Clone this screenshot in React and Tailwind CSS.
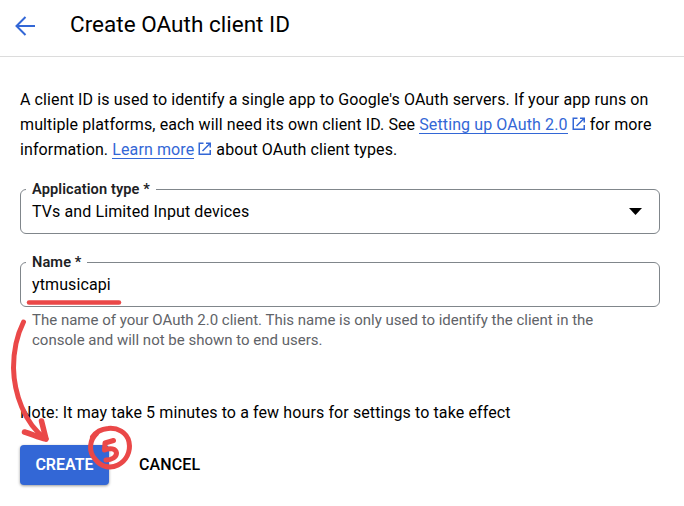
function ExternalIcon() {
  return (
    <svg className="ml-1 inline-block size-[14px] align-[-1px]" viewBox="0 0 14 14" fill="none" stroke="#3367d6" strokeWidth="1.5">
      <path d="M5.5 1.25H1.25V12.25H12.25V8" />
      <path d="M8 1.25h4.25V5.500M12 1.5L4.5 9" />
    </svg>
  );
}

function DocLink({ children }) {
  return (
    <>
      <a href="#" className="inline-block h-[22px] border-b border-[#3367d6] leading-[25px] text-[#3367d6]">{children}</a>
      <ExternalIcon />
    </>
  );
}

function Field({ label, children, className = "" }) {
  return (
    <fieldset className={"h-[54px] w-[640px] rounded-md border border-[#80868b] pl-[5px] " + className}>
      <legend className="h-[19px] px-1.5 text-[14.6px] leading-[18px] font-semibold tracking-[0.1px] text-[#202124]">{label}</legend>
      <div className="flex h-[25px] items-center justify-between pr-[17px] pl-1.5 text-base text-black">{children}</div>
    </fieldset>
  );
}

function Annotations() {
  return (
    <svg className="pointer-events-none absolute inset-0" width="684" height="506" viewBox="0 0 684 506" fill="none" stroke="#ea4848" strokeLinecap="round" strokeLinejoin="round">
      <path d="M29 302.5H119" strokeWidth="4.5" />
      <path d="M23.5 322C17 335 13.500 352 13.5 368C14 392 24 424 46 439" strokeWidth="5" />
      <path d="M24.5 432C32 434 38 437.5 46 439L41.5 421" strokeWidth="5.5" />
      <path d="M97 433C89 440 88.500 452 95 459C101 467 110 469 118 465C126 461 131 452 129 442C127 432 117 427.500 108 428.500C102 429 96 432 92.500 437" strokeWidth="5" />
      <path d="M113.5 440.500L105 443L104.500 450C110 447.500 116 448.500 116.500 453C116.500 457 112 460 106 460" strokeWidth="5" />
    </svg>
  );
}

export default function App() {
  return (
    <div className="relative h-[506px] w-[684px] overflow-hidden bg-white font-[Roboto,sans-serif] text-base tracking-[0.108px] text-black">
      <header className="flex h-[57px] items-center border-b border-[#dcdcdc] pb-2 pl-[15px]">
        <svg className="mt-[3px] size-5" viewBox="0 0 20 20" fill="none" stroke="#3367d6" strokeWidth="2">
          <path d="M20 10H2M10.500 1L1.500 10L10.500 19" />
        </svg>
        <h1 className="ml-[35px] text-[22.5px] leading-7 tracking-[0.02px] whitespace-nowrap">Create OAuth client ID</h1>
      </header>
      <main className="px-5 pt-[30px]">
        <p className="h-[93px] leading-[25px] whitespace-nowrap">
          <span className="block h-[25px]">A client ID is used to identify a single app to Google's OAuth servers. If your app runs on</span>
          <span className="block h-[25px]">multiple platforms, each will need its own client ID. See <DocLink>Setting up OAuth 2.0</DocLink> for more</span>
          <span className="block h-[25px]">information. <DocLink>Learn more</DocLink> about OAuth client types.</span>
        </p>
        <Field label="Application type *">
          <span>TVs and Limited Input devices</span>
          <svg className="h-[7px] w-[13px]" viewBox="0 0 13 7"><path d="M0 0h13L6.500 7z" fill="#000" /></svg>
        </Field>
        <Field label="Name *" className="mt-[19px]">
          <span>ytmusicapi</span>
        </Field>
        <p className="mt-[3px] pl-3 text-[15px] leading-5 tracking-normal whitespace-nowrap text-[#5f6368]">
          The name of your OAuth 2.0 client. This name is only used to identify the client in the<br />
          console and will not be shown to end users.
        </p>
        <p className="mt-[51px] leading-6">Note: It may take 5 minutes to a few hours for settings to take effect</p>
        <div className="mt-5 flex items-center">
          <button className="h-10 w-[89px] rounded bg-[#3367d6] font-semibold tracking-normal text-white shadow-[0_1px_3px_rgba(0,0,0,0.4)]">CREATE</button>
          <button className="ml-[30px] font-medium">CANCEL</button>
        </div>
      </main>
      <Annotations />
    </div>
  );
}
